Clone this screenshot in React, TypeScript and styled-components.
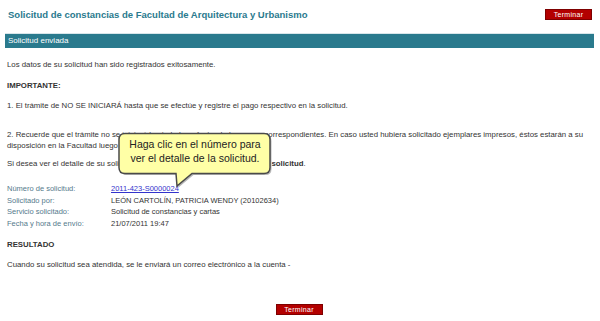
import styled, { createGlobalStyle } from "styled-components";

const GlobalStyle = createGlobalStyle`
  body {
    margin: 0;
    background: #fff;
    font-family: "Liberation Sans", Arial, sans-serif;
  }
`;

const Page = styled.div`
  position: relative;
  width: 600px;
  height: 321px;
  overflow: hidden;
  padding: 0 6px 0 5px;
  box-sizing: border-box;
`;

const Header = styled.div`
  display: flex;
  justify-content: space-between;
  align-items: flex-start;
  height: 33px;
  padding: 9px 2px 0 3px;
  box-sizing: border-box;
`;

const Title = styled.h1`
  margin: 0;
  font-size: 9.5px;
  line-height: 12px;
  font-weight: bold;
  color: #2a7a8e;
`;

const Button = styled.button`
  width: 47px;
  height: 11px;
  padding: 0;
  border: 1px solid #7e0000;
  background: #b30000;
  color: #fff;
  font-family: "Liberation Sans", Arial, sans-serif;
  font-size: 7px;
  line-height: 9px;
  letter-spacing: 0.3px;
  cursor: pointer;
`;

const Bar = styled.div`
  height: 14px;
  line-height: 14px;
  background: #2a7a8d;
  border-top: 1px solid #d8e6ea;
  color: #fff;
  font-size: 8px;
  padding-left: 3px;
`;

const Content = styled.div`
  padding: 0 2px;
  color: #333;
  font-size: 7.8px;
`;

const Para = styled.p<{ $gap: number }>`
  margin: ${(p) => p.$gap}px 0 0;
  line-height: 11px;
`;

const Heading = styled.h2<{ $gap: number }>`
  margin: ${(p) => p.$gap}px 0 0;
  font-size: 7.8px;
  line-height: 11px;
  font-weight: bold;
  color: #333;
`;

const Details = styled.div`
  display: grid;
  grid-template-columns: 104px auto;
  margin-top: 14px;
  line-height: 11.5px;
  font-size: 7.5px;
`;

const Label = styled.span`
  color: #557a8c;
`;

const Value = styled.span`
  color: #333;
`;

const Link = styled.a`
  color: #3333cc;
  text-decoration: underline;
`;

const Footer = styled.div`
  display: flex;
  justify-content: center;
  margin-top: 34px;
  padding-right: 1px;
`;

const Callout = styled.div`
  position: absolute;
  left: 116px;
  top: 130px;
  width: 160px;
  height: 60px;
`;

const CalloutText = styled.div`
  position: absolute;
  left: 2px;
  top: 7px;
  width: 154px;
  text-align: center;
  font-size: 10.5px;
  line-height: 14px;
  color: #222;
`;

const bubblePath =
  "M9 3.5 H148 Q154 3.5 154 9.5 V37.5 Q154 43.5 148 43.5 H76 L61 56 L60 43.5 H9 Q3 43.5 3 37.5 V9.5 Q3 3.5 9 3.5 Z";

function Bubble() {
  return (
    <Callout>
      <svg width="160" height="60" viewBox="0 0 160 60">
        <path d={bubblePath} fill="#b8b8b8" transform="translate(1.5 1.5)" />
        <path d={bubblePath} fill="#ffffa6" stroke="#4a4a4a" strokeWidth="1.5" />
      </svg>
      <CalloutText>
        Haga clic en el número para
        <br />
        ver el detalle de la solicitud.
      </CalloutText>
    </Callout>
  );
}

export default function App() {
  return (
    <Page>
      <GlobalStyle />
      <Header>
        <Title>Solicitud de constancias de Facultad de Arquitectura y Urbanismo</Title>
        <Button>Terminar</Button>
      </Header>
      <Bar>Solicitud enviada</Bar>
      <Content>
        <Para $gap={11}>Los datos de su solicitud han sido registrados exitosamente.</Para>
        <Heading $gap={10}>IMPORTANTE:</Heading>
        <Para $gap={9}>
          1. El trámite de NO SE INICIARÁ hasta que se efectúe y registre el pago respectivo en la solicitud.
        </Para>
        <Para $gap={18}>
          2. Recuerde que el trámite no se iniciará hasta haber efectuado los pagos correspondientes. En caso usted
          hubiera solicitado ejemplares impresos, éstos estarán a su disposición en la Facultad luego de cinco días
          hábiles de realizado el pago.
        </Para>
        <Para $gap={7}>
          Si desea ver el detalle de su solicitud, haga clic en el enlace del <b>número de solicitud</b>.
        </Para>
        <Details>
          <Label>Número de solicitud:</Label>
          <Value>
            <Link href="#">2011-423-S0000024</Link>
          </Value>
          <Label>Solicitado por:</Label>
          <Value>LEÓN CARTOLÍN, PATRICIA WENDY (20102634)</Value>
          <Label>Servicio solicitado:</Label>
          <Value>Solicitud de constancias y cartas</Value>
          <Label>Fecha y hora de envío:</Label>
          <Value>21/07/2011 19:47</Value>
        </Details>
        <Heading $gap={10}>RESULTADO</Heading>
        <Para $gap={9}>Cuando su solicitud sea atendida, se le enviará un correo electrónico a la cuenta -</Para>
        <Footer>
          <Button>Terminar</Button>
        </Footer>
      </Content>
      <Bubble />
    </Page>
  );
}
